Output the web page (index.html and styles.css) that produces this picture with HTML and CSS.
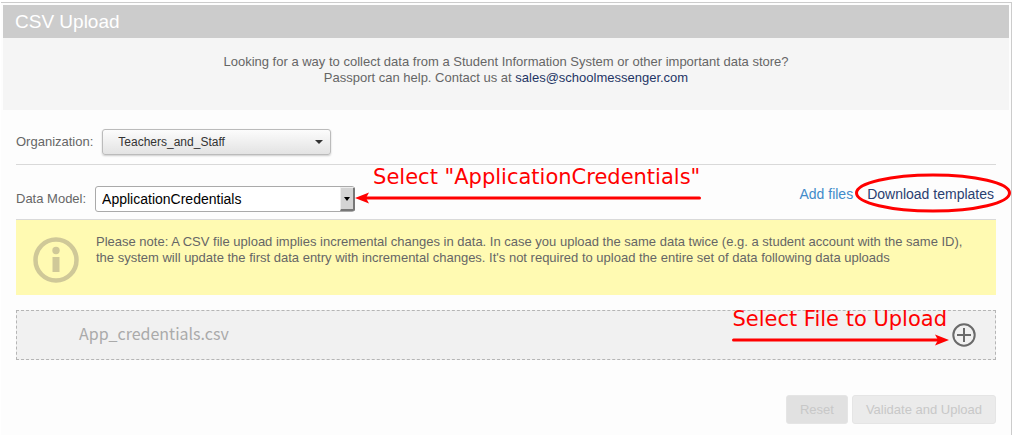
FILE: index.html
```html
<!DOCTYPE html>
<html lang="en">
<head>
<meta charset="utf-8">
<title>CSV Upload</title>
<link rel="stylesheet" href="styles.css">
</head>
<body>
<main class="panel">
  <h1 class="title">CSV Upload</h1>
  <p class="intro">Looking for a way to collect data from a Student Information System or other important data store?<br>Passport can help. Contact us at <a class="mail" href="mailto:sales@schoolmessenger.com">sales@schoolmessenger.com</a></p>
  <form class="content">
    <div class="row row-org">
      <label class="label" for="org">Organization:</label>
      <span class="picker picker-org">
        <select class="select select-org" id="org"><option>Teachers_and_Staff</option></select>
        <svg class="caret" width="8" height="4" viewBox="0 0 8 4" aria-hidden="true"><path d="M0 0h8L4 4z" fill="#333"/></svg>
      </span>
    </div>
    <div class="row row-model">
      <label class="label" for="model">Data Model:</label>
      <span class="picker picker-model">
        <select class="select select-model" id="model"><option>ApplicationCredentials</option></select>
        <span class="drop" aria-hidden="true"><svg width="6" height="4" viewBox="0 0 6 4"><path d="M0 0h6L3 4z" fill="#000"/></svg></span>
        <span class="note note-model">Select "ApplicationCredentials"
          <svg class="arrow" width="346" height="12" viewBox="0 0 346 12" aria-hidden="true"><path d="M10 6H344.500" stroke="#f00" stroke-width="3" stroke-linecap="round"/><path d="M0 6L14 0.500L11 6L14 11.500z" fill="#f00"/></svg>
        </span>
      </span>
      <nav class="links">
        <a class="add" href="#files">Add files</a>
        <a class="templates" href="#templates">Download templates<svg class="ring" width="156" height="40" viewBox="0 0 156 40" aria-hidden="true"><ellipse cx="78" cy="20" rx="76.500" ry="18" fill="none" stroke="#f00" stroke-width="3"/></svg></a>
      </nav>
    </div>
    <div class="notice">
      <svg class="info" width="46" height="46" viewBox="0 0 46 46" aria-hidden="true"><circle cx="23" cy="23" r="20.500" fill="none" stroke="#cfc898" stroke-width="4.500"/><circle cx="23" cy="13.500" r="3.700" fill="#cfc898"/><path d="M19.500 20h7v15h-7z" fill="#cfc898"/></svg>
      <p class="notice-text">Please note: A CSV file upload implies incremental changes in data. In case you upload the same data twice (e.g. a student account with the same ID), the system will update the first data entry with incremental changes. It's not required to upload the entire set of data following data uploads</p>
    </div>
    <div class="file" id="files">
      <span class="filename">App_credentials.csv</span>
      <button class="plus" type="button" aria-label="Select file">
        <svg width="24" height="24" viewBox="0 0 24 24" aria-hidden="true"><g fill="none" stroke="#6a6a6a" stroke-width="2"><circle cx="12" cy="12" r="10.700"/><path d="M12 5v14M5 12h14"/></g></svg>
      </button>
      <span class="note note-file">Select File to Upload
        <svg class="arrow" width="217" height="12" viewBox="0 0 217 12" aria-hidden="true"><path d="M1.500 6H206" stroke="#f00" stroke-width="3" stroke-linecap="round"/><path d="M217 6L203 0.500L206 6L203 11.500z" fill="#f00"/></svg>
      </span>
    </div>
    <div class="actions">
      <button class="button reset" type="reset" disabled>Reset</button>
      <button class="button submit" type="submit" disabled>Validate and Upload</button>
    </div>
  </form>
</main>
</body>
</html>
```
FILE: styles.css
```css
* {
  box-sizing: border-box;
}

body {
  margin: 0;
  background: #fff;
  color: #666;
  font: 13px/16px "Liberation Sans", Arial, sans-serif;
}

a {
  text-decoration: none;
}

.panel {
  min-height: calc(100vh - 2px);
  margin: 2px 0 0 1px;
  padding: 2px 2px 0;
  background: #fdfdfd;
  border-top: 1px solid #ccc;
  border-right: 1px solid #ccc;
}

.title {
  margin: 0;
  padding: 0 12px;
  background: #ccc;
  color: #fff;
  font-size: 19px;
  font-weight: 400;
  line-height: 33px;
}

.intro {
  margin: 0;
  padding: 16px 0 24px;
  background: #f5f5f5;
  text-align: center;
}

.mail {
  color: #1f3565;
}

.content {
  padding: 19px 13px 0;
}

.row {
  display: flex;
  align-items: center;
  gap: 9px;
  border-bottom: 1px solid #d9d9d9;
}

.row-org {
  padding-bottom: 9px;
}

.row-model {
  padding: 21px 0 7px;
}

.picker {
  position: relative;
  display: flex;
}

.select {
  appearance: none;
  width: 100%;
  height: 26px;
  margin: 0;
  font-family: inherit;
}

.picker-org {
  width: 229px;
}

.select-org {
  padding: 0 15px;
  border: 1px solid #bbb;
  border-radius: 3px;
  background: linear-gradient(#fcfcfc, #e3e3e3);
  box-shadow: 0 1px 2px #ccc;
  color: #333;
  font-size: 12px;
}

.caret {
  position: absolute;
  top: 11px;
  right: 8px;
}

.picker-model {
  width: 260px;
}

.select-model {
  padding: 0 6px;
  border: 1px solid #aaa;
  border-radius: 3px;
  background: #fff;
  color: #000;
  font-size: 14px;
}

.drop {
  position: absolute;
  top: 1px;
  right: 0;
  bottom: 1px;
  width: 15px;
  display: flex;
  align-items: center;
  justify-content: center;
  border: solid;
  border-width: 1px 2px 2px 1px;
  border-color: #eee #777 #777 #eee;
  border-radius: 0 2px 2px 0;
  background: #d4d4d4;
}

.note {
  position: absolute;
  color: #f00;
  font: 21px/24px "DejaVu Sans", sans-serif;
  white-space: nowrap;
}

.note-model {
  top: -21px;
  left: 278px;
}

.arrow {
  position: absolute;
  top: 27px;
}

.note-model .arrow {
  left: -18px;
}

.links {
  display: flex;
  gap: 14px;
  margin-left: auto;
  padding: 0 2px 10px 0;
  font-size: 14px;
}

.add {
  color: #428bca;
}

.templates {
  position: relative;
  color: #2a4070;
}

.ring {
  position: absolute;
  top: -13px;
  right: -17px;
}

.notice {
  display: flex;
  gap: 17px;
  padding: 14px 17px 12px;
  background: #fffab2;
}

.info {
  flex: none;
  margin-top: 3px;
}

.notice-text {
  margin: 0;
}

.file {
  position: relative;
  display: flex;
  align-items: center;
  justify-content: space-between;
  height: 50px;
  margin-top: 15px;
  padding: 0 19px 0 62px;
  border: 1px dashed #b5b5b5;
  background: #f1f1f1;
}

.filename {
  padding-bottom: 4px;
  color: #aaa;
  font: 16px/24px "Noto Sans CJK SC", sans-serif;
}

.plus {
  display: flex;
  padding: 0;
  border: 0;
  background: none;
}

.note-file {
  top: -4px;
  right: 48px;
}

.note-file .arrow {
  right: -2px;
}

.actions {
  display: flex;
  justify-content: flex-end;
  gap: 4px;
  margin-top: 35px;
}

.button {
  height: 29px;
  padding: 0 13px;
  border: 1px solid #e5e5e5;
  border-radius: 3px;
  background: #ebebeb;
  color: #c8c8c8;
  font: inherit;
}

.reset {
  background: #e1e1e1;
}
```
